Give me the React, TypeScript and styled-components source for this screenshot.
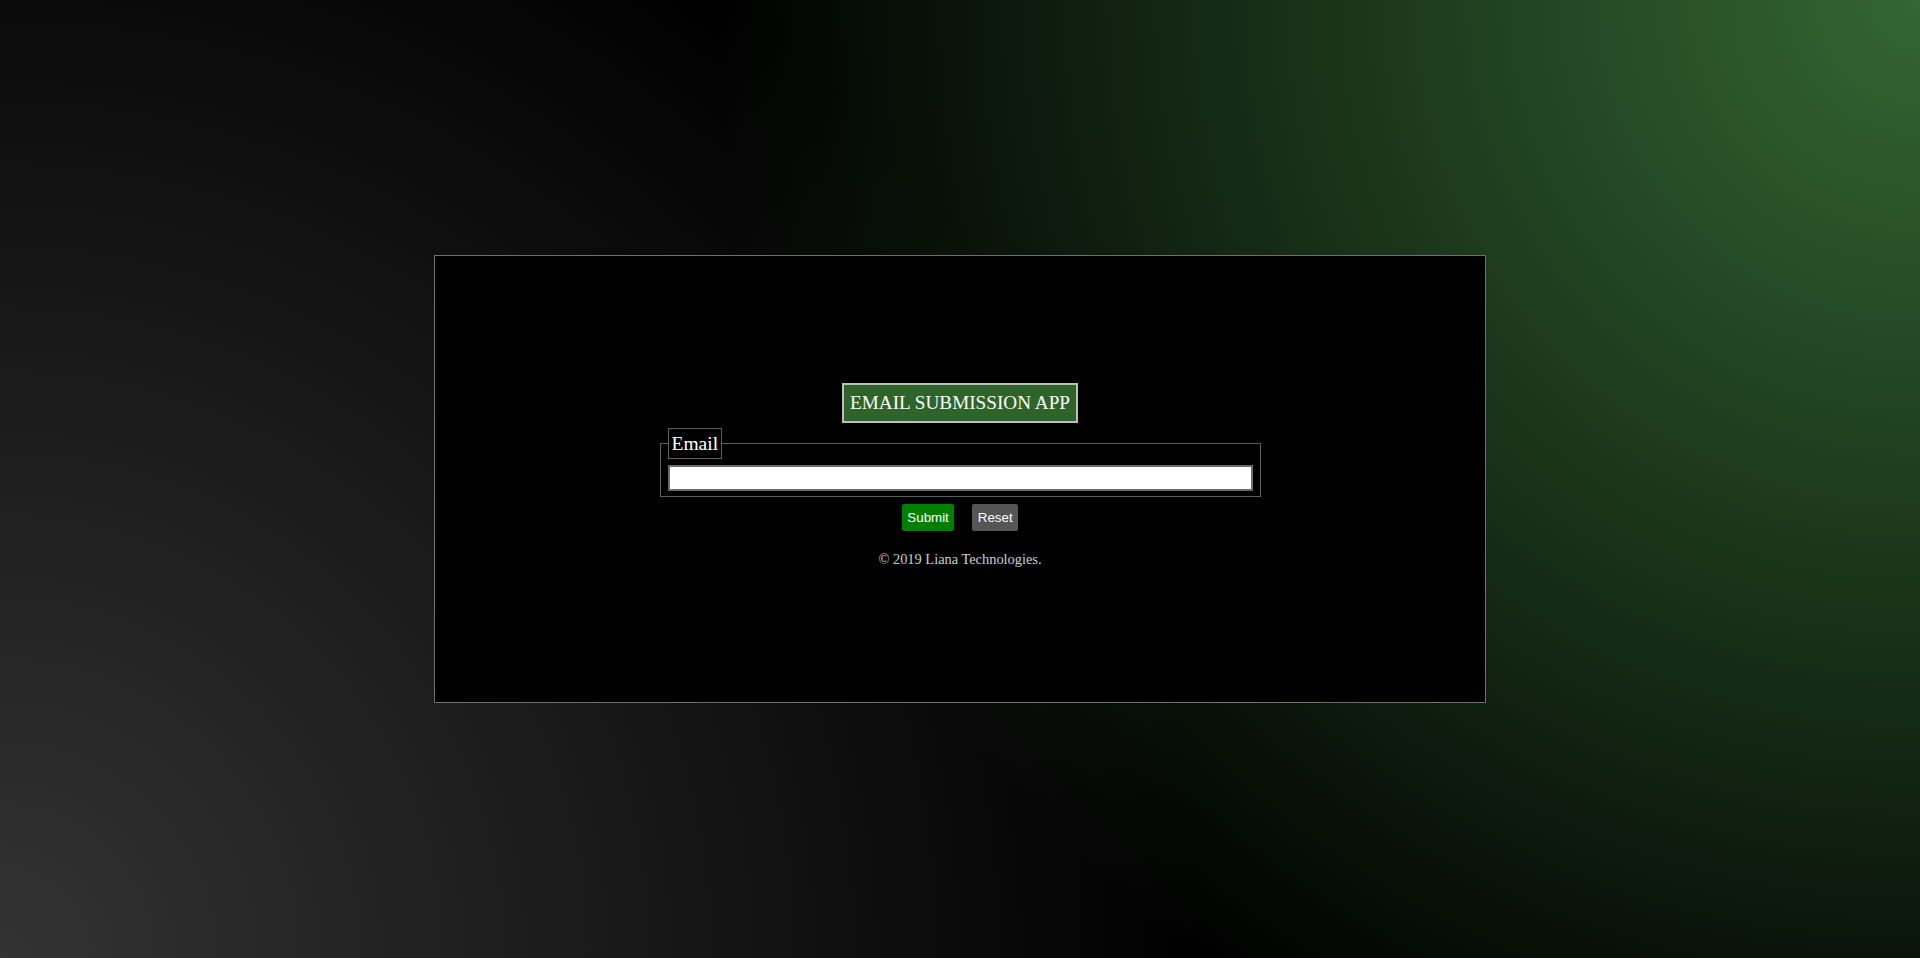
import React from "react";
import styled, { createGlobalStyle } from "styled-components";

const GlobalStyle = createGlobalStyle`
  html, body {
    margin: 0;
    padding: 0;
    height: 100%;
  }
  body {
    font-family: "Liberation Serif", "Times New Roman", serif;
    background-color: #000;
    background-image:
      radial-gradient(circle farthest-corner at 100% 0%, #336633 0%, rgba(51, 102, 51, 0) 56%),
      radial-gradient(circle farthest-corner at 0% 100%, #333333 0%, #000000 56%);
    background-attachment: fixed;
  }
  #root {
    height: 100%;
  }
`;

const Page = styled.div`
  height: 100vh;
  display: flex;
  align-items: center;
  justify-content: center;
`;

const Card = styled.main`
  box-sizing: border-box;
  width: 1052px;
  height: 448px;
  background: #000;
  border: 1px solid #6f6f6f;
  display: flex;
  flex-direction: column;
  align-items: center;
  justify-content: center;
  padding-bottom: 7px;
`;

const Title = styled.h1`
  margin: 0;
  background: #2e6429;
  border: 2px solid #bdbdbd;
  color: #ffffff;
  font-family: "Liberation Serif", "Times New Roman", serif;
  font-weight: normal;
  font-size: 19.2px;
  line-height: 24px;
  padding: 6px 6px;
  text-transform: uppercase;
`;

const Form = styled.form`
  display: flex;
  flex-direction: column;
  align-items: center;
  margin-top: 5px;
`;

const Fieldset = styled.fieldset`
  box-sizing: border-box;
  width: 601px;
  margin: 0;
  padding: 6px 7px 5px;
  border: 1px solid #5f5f5f;
  min-inline-size: 0;
`;

const Legend = styled.legend`
  padding: 3px 3px;
  border: 1px solid #5f5f5f;
  color: #ffffff;
  font-family: "Liberation Serif", "Times New Roman", serif;
  font-size: 19.5px;
  line-height: 23px;
`;

const EmailInput = styled.input`
  display: block;
  box-sizing: border-box;
  width: 100%;
  height: 26px;
  margin: 0;
  padding: 2px 4px;
  border: 2px solid #6b6b6b;
  background: #ffffff;
  font-family: "Liberation Sans", Arial, sans-serif;
  font-size: 13.33px;
  outline: none;
`;

const ButtonRow = styled.div`
  display: flex;
  gap: 18px;
  margin-top: 7px;
`;

const ActionButton = styled.button<{ $variant: "submit" | "reset" }>`
  border: none;
  border-radius: 2px;
  margin: 0;
  padding: 6px 5.5px;
  font-family: "Liberation Sans", Arial, sans-serif;
  font-size: 13.33px;
  line-height: 15px;
  color: #ffffff;
  background: ${(p) => (p.$variant === "submit" ? "#008000" : "#555555")};
  cursor: pointer;
`;

const Footer = styled.p`
  margin: 20px 0 0;
  color: #cccccc;
  font-family: "Liberation Serif", "Times New Roman", serif;
  font-size: 14.4px;
  line-height: 17px;
`;

export default function App() {
  return (
    <>
      <GlobalStyle />
      <Page>
        <Card>
          <Title>Email Submission App</Title>
          <Form onSubmit={(e) => e.preventDefault()}>
            <Fieldset>
              <Legend>Email</Legend>
              <EmailInput type="email" name="email" aria-label="Email" />
            </Fieldset>
            <ButtonRow>
              <ActionButton type="submit" $variant="submit">
                Submit
              </ActionButton>
              <ActionButton type="reset" $variant="reset">
                Reset
              </ActionButton>
            </ButtonRow>
          </Form>
          <Footer>© 2019 Liana Technologies.</Footer>
        </Card>
      </Page>
    </>
  );
}
